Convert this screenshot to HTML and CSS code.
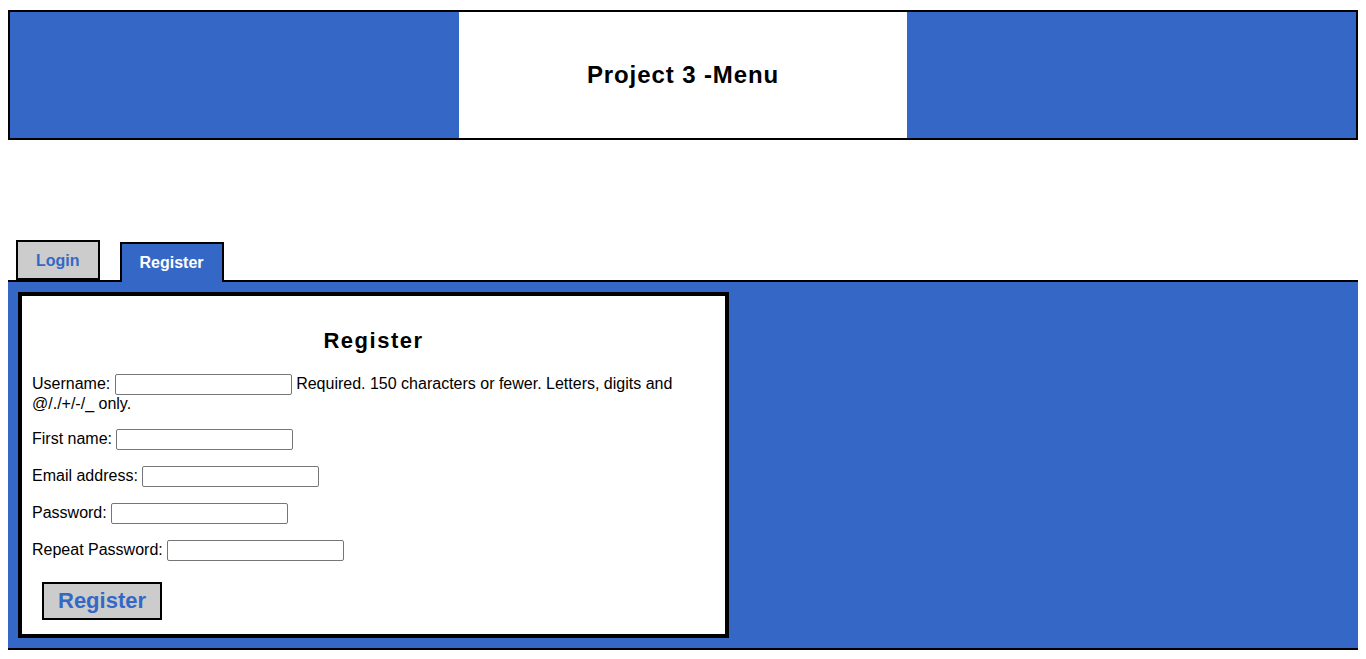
FILE: index.html
```html
<!DOCTYPE html>
<html lang="en">
<head>
<meta charset="utf-8">
<title>Project 3 -Menu</title>
<link rel="stylesheet" href="styles.css">
</head>
<body>
<header class="header">
  <div class="header-side"></div>
  <div class="header-center"><h1 class="title">Project 3 -Menu</h1></div>
  <div class="header-side"></div>
</header>

<nav class="tabs">
  <a class="tab" href="#">Login</a>
  <a class="tab tab-active" href="#">Register</a>
</nav>

<main class="panel">
  <form class="form-box">
    <h2 class="form-title">Register</h2>
    <p class="row">Username: <input class="field" type="text"> Required. 150 characters or fewer. Letters, digits and @/./+/-/_ only.</p>
    <p class="row">First name: <input class="field" type="text"></p>
    <p class="row">Email address: <input class="field" type="email"></p>
    <p class="row">Password: <input class="field" type="password"></p>
    <p class="row">Repeat Password: <input class="field" type="password"></p>
    <div class="actions"><button class="submit" type="button">Register</button></div>
  </form>
</main>
</body>
</html>
```
FILE: styles.css
```css
body {
  margin: 8px;
  font-family: "Liberation Sans", Arial, sans-serif;
  font-size: 16px;
  color: #000;
  background: #fff;
}

.header {
  display: flex;
  margin-top: 2px;
  height: 130px;
  box-sizing: border-box;
  border: 2px solid #000;
  background: #3568c6;
}

.header-side {
  flex: 1;
}

.header-center {
  flex: 1;
  background: #fff;
  display: flex;
  align-items: center;
  justify-content: center;
}

.title {
  margin: 0;
  font-size: 24px;
  font-weight: bold;
  letter-spacing: 0.9px;
  line-height: 28px;
}

.tabs {
  display: flex;
  align-items: flex-end;
  gap: 20px;
  margin-top: 100px;
  padding-left: 8px;
}

.tab {
  display: block;
  padding: 10px 18px 8px;
  line-height: 18px;
  border: 2px solid #000;
  background: #ccc;
  color: #3568c6;
  font-weight: bold;
  text-decoration: none;
}

.tab-active {
  position: relative;
  background: #3568c6;
  color: #fff;
  border-bottom: none;
  padding-bottom: 10px;
  margin-bottom: -2px;
}

.panel {
  display: block;
  background: #3568c6;
  border-top: 2px solid #000;
  border-bottom: 2px solid #000;
  padding: 10px;
}

.form-box {
  width: 711px;
  box-sizing: border-box;
  border: 4px solid #000;
  background: #fff;
  padding: 10px;
}

.form-title {
  margin: 22px 0 21px;
  text-align: center;
  font-size: 22px;
  line-height: 25px;
  letter-spacing: 1.5px;
}

.row {
  margin: 0 0 16px;
}

.field {
  width: 177px;
  height: 21px;
  box-sizing: border-box;
  border: 1px solid #767676;
  border-radius: 2px;
  padding: 1px 2px;
  font-size: 13.33px;
  vertical-align: baseline;
}

.actions {
  margin: 21px 0 4px 10px;
}

.submit {
  border: 2px solid #000;
  background: #ccc;
  color: #3568c6;
  font-family: "Liberation Sans", Arial, sans-serif;
  font-weight: bold;
  font-size: 22px;
  line-height: 25px;
  padding: 4px 14px 5px;
  margin: 0;
}
```
